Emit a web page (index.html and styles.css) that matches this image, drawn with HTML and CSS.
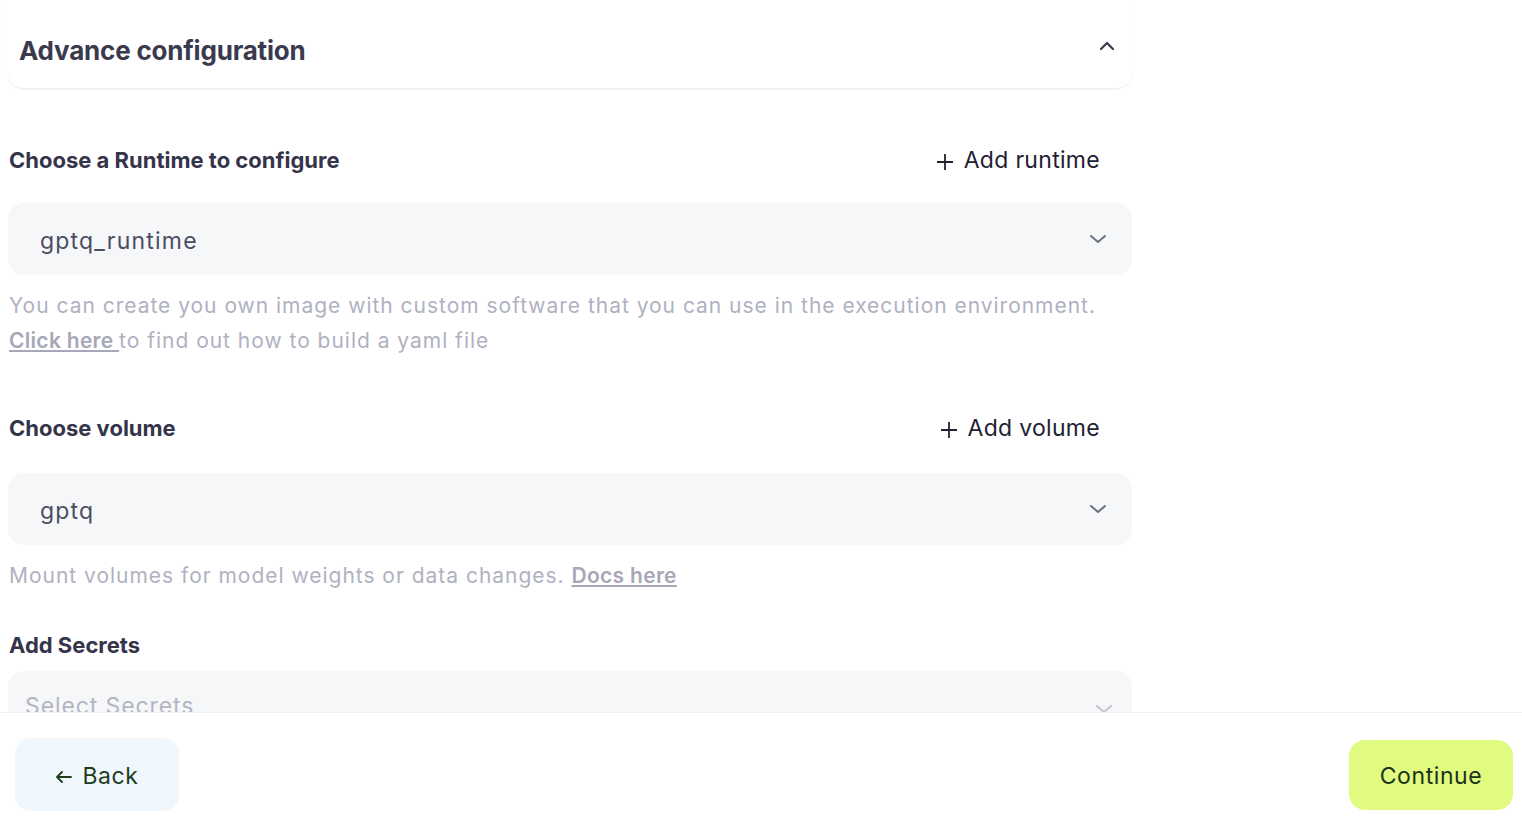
FILE: index.html
```html
<!DOCTYPE html>
<html>
<head>
<meta charset="utf-8">
<link rel="stylesheet" href="styles.css">
</head>
<body>
<div class="page">
  <div class="content">
    <div class="inner">
      <div class="card">
        <h2 class="card-title">Advance configuration</h2>
        <svg class="chev-up" width="16" height="10" viewBox="0 0 16 10"><path d="M2 8 L8 2 L14 8" fill="none" stroke="#3a3a4e" stroke-width="2.2" stroke-linecap="round" stroke-linejoin="round"/></svg>
      </div>

      <div class="label-row first">
        <span class="label">Choose a Runtime to configure</span>
        <span class="add"><svg width="18" height="18" viewBox="0 0 18 18"><path d="M9 1 V17 M1 9 H17" stroke="#1f2233" stroke-width="1.8"/></svg>Add runtime</span>
      </div>
      <div class="select">
        <span class="value">gptq_runtime</span>
        <svg class="chev" width="18" height="10" viewBox="0 0 18 10"><path d="M2 2 L9 8 L16 2" fill="none" stroke="#6e7083" stroke-width="2" stroke-linecap="round" stroke-linejoin="round"/></svg>
      </div>
      <p class="help">You can create you own image with custom software that you can use in the execution environment.<br><a class="link">Click here </a>to find out how to build a yaml file</p>

      <div class="label-row second">
        <span class="label">Choose volume</span>
        <span class="add"><svg width="18" height="18" viewBox="0 0 18 18"><path d="M9 1 V17 M1 9 H17" stroke="#1f2233" stroke-width="1.8"/></svg>Add volume</span>
      </div>
      <div class="select">
        <span class="value">gptq</span>
        <svg class="chev" width="18" height="10" viewBox="0 0 18 10"><path d="M2 2 L9 8 L16 2" fill="none" stroke="#6e7083" stroke-width="2" stroke-linecap="round" stroke-linejoin="round"/></svg>
      </div>
      <p class="help">Mount volumes for model weights or data changes. <a class="link">Docs here</a></p>

      <div class="label-row third">
        <span class="label">Add Secrets</span>
      </div>
      <div class="select secrets">
        <span class="placeholder">Select Secrets</span>
        <svg class="chev" width="18" height="10" viewBox="0 0 18 10"><path d="M2 2 L9 8 L16 2" fill="none" stroke="#c4c5cd" stroke-width="2" stroke-linecap="round" stroke-linejoin="round"/></svg>
      </div>
    </div>
  </div>
  <div class="footer">
    <button class="btn back"><svg width="18" height="14" viewBox="0 0 18 14"><path d="M16 7 H2 M7 2 L2 7 L7 12" fill="none" stroke="#1f3d1c" stroke-width="1.8" stroke-linecap="round" stroke-linejoin="round"/></svg>Back</button>
    <button class="btn continue">Continue</button>
  </div>
</div>
</body>
</html>
```

FILE: styles.css
```css
* { box-sizing: border-box; }
html, body { margin: 0; padding: 0; background: #ffffff; }
body { font-family: Inter, "Noto Sans", sans-serif; }

.page {
  height: 821px;
  display: flex;
  flex-direction: column;
}

.content {
  flex: 1;
  overflow: hidden;
  padding-left: 8px;
}

.inner { width: 1124px; }

.card {
  height: 89px;
  display: flex;
  align-items: center;
  justify-content: space-between;
  padding: 13px 17px 0 11px;
  border-radius: 0 0 16px 16px;
  border-bottom: 1px solid #efeff2;
  box-shadow: 0 1px 2px rgba(20, 20, 40, 0.04);
}

.card-title {
  margin: 0;
  font-size: 26px;
  font-weight: 700;
  color: #3a3a4e;
  letter-spacing: -0.2px;
}

.chev-up { margin-top: -10px; }

.label-row {
  height: 40px;
  display: flex;
  align-items: center;
  justify-content: space-between;
  padding-left: 1px;
}
.label-row.first { margin-top: 51px; margin-bottom: 23px; }
.label-row.second { margin-top: 50px; margin-bottom: 25px; }
.label-row.third { margin-top: 32px; margin-bottom: 6px; }

.label {
  font-size: 22px;
  font-weight: 700;
  color: #34344a;
  letter-spacing: 0;
}

.add {
  display: flex;
  align-items: center;
  gap: 10px;
  margin-right: 32px;
  font-size: 23px;
  letter-spacing: 0.3px;
  color: #1f2233;
}
.add svg { margin-top: 3px; }

.select {
  height: 72px;
  background: #f6f7f9;
  border-radius: 16px;
  display: flex;
  align-items: center;
  justify-content: space-between;
  padding: 4px 25px 0 32px;
}
.select .value {
  font-size: 23px;
  letter-spacing: 1.2px;
  color: #4b4d63;
}
.select .chev { margin-top: -4px; }
.select.secrets { padding-left: 17px; padding-right: 19px; align-items: flex-start; padding-top: 21px; }
.select.secrets .chev { margin-top: 12px; }
.placeholder { font-size: 23px; letter-spacing: 0.9px; color: #b4b5c3; }

.help {
  margin: 13px 0 0 1px;
  font-size: 21px;
  line-height: 35px;
  letter-spacing: 0.98px;
  color: #b0b1c1;
}
.link {
  color: #a7a8b7;
  font-weight: 600;
  letter-spacing: 0.3px;
  text-decoration: underline;
}

.footer {
  height: 109px;
  border-top: 1px solid #efeff2;
  display: flex;
  justify-content: space-between;
  align-items: flex-start;
  padding: 25px 9px 0 15px;
  background: #ffffff;
}

.btn {
  border: none;
  width: 164px;
  font-family: Inter, "Noto Sans", sans-serif;
  font-size: 23px;
  letter-spacing: 0.6px;
  border-radius: 16px;
  display: flex;
  align-items: center;
  justify-content: center;
  gap: 9px;
  padding-top: 3px;
  cursor: pointer;
}
.btn.back {
  height: 73px;
  background: #f0f7fc;
  color: #1f3d1c;
}
.btn.back svg { margin-top: 3px; }
.btn.continue {
  height: 70px;
  margin-top: 2px;
  background: #e0fb80;
  color: #1c3318;
}
```
